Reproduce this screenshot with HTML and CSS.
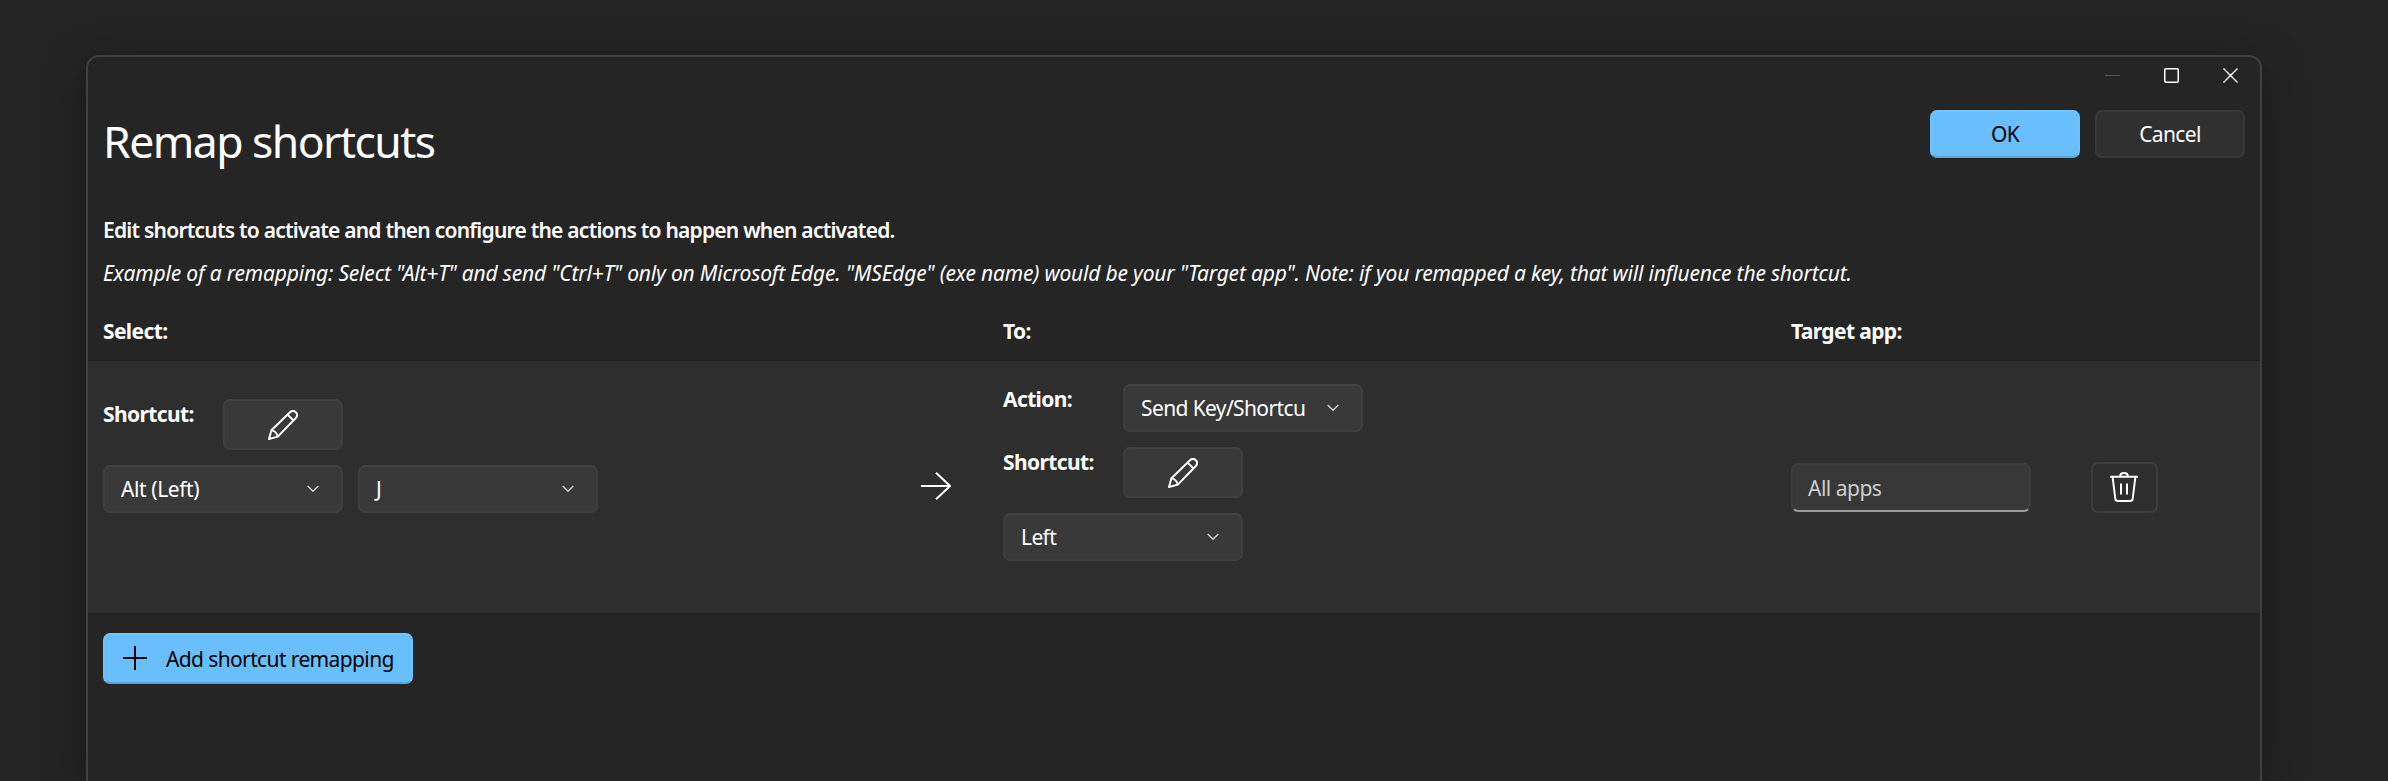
FILE: index.html
```html
<!DOCTYPE html>
<html lang="en">
<head>
<meta charset="utf-8">
<title>Remap shortcuts</title>
<link rel="stylesheet" href="styles.css">
</head>
<body>
<svg class="defs" width="0" height="0" aria-hidden="true">
  <symbol id="pencil" viewBox="0 0 30 30"><g fill="none" stroke="currentColor" stroke-width="2" stroke-linejoin="round"><path d="M1 29 L3.4 20.2 L22 2.2 C24 0.4 26.2 0.6 27.8 2.2 C29.4 3.8 29.6 6 27.8 8 L9.8 26.6 Z"/><path d="M19.6 4.6 L25.4 10.4 M3.4 20.2 C6.4 20.6 9.2 23.4 9.8 26.6"/></g></symbol>
  <symbol id="chevron" viewBox="0 0 12 8"><path d="M0.7 1 L6 6.3 L11.3 1" fill="none" stroke="currentColor" stroke-width="1.5"/></symbol>
</svg>
<main class="window">
  <div class="titlebar">
    <svg class="caption dim" viewBox="0 0 15 15"><path d="M0 7.5H15" stroke="currentColor"/></svg>
    <svg class="caption" viewBox="0 0 15 15"><rect x=".75" y=".75" width="13.5" height="13.5" rx="1" fill="none" stroke="currentColor" stroke-width="1.5"/></svg>
    <svg class="caption" viewBox="0 0 15 15"><path d="M.5 .5L14.5 14.5M14.5 .5L.5 14.5" stroke="currentColor" stroke-width="1.4"/></svg>
  </div>
  <header class="header">
    <h1 class="title">Remap shortcuts</h1>
    <div class="actions">
      <button class="btn accent">OK</button>
      <button class="btn subtle">Cancel</button>
    </div>
  </header>
  <p class="lead">Edit shortcuts to activate and then configure the actions to happen when activated.</p>
  <p class="example">Example of a remapping: Select "Alt+T" and send "Ctrl+T" only on Microsoft Edge. "MSEdge" (exe name) would be your "Target app". Note: if you remapped a key, that will influence the shortcut.</p>
  <div class="columns heads">
    <span class="label">Select:</span><span></span><span class="label">To:</span><span class="label">Target app:</span>
  </div>
  <section class="columns row">
    <div class="from">
      <div class="field"><span class="label">Shortcut:</span><button class="btn edit"><svg class="pencil"><use href="#pencil"/></svg></button></div>
      <div class="combos">
        <div class="combo"><span class="alt">Alt (Left)</span><svg class="chevron"><use href="#chevron"/></svg></div>
        <div class="combo"><span>J</span><svg class="chevron"><use href="#chevron"/></svg></div>
      </div>
    </div>
    <svg class="arrow" viewBox="0 0 30 28"><path d="M0 14H29M15 .7L29 14L15 27.3" fill="none" stroke="currentColor" stroke-width="2"/></svg>
    <div class="to">
      <div class="field"><span class="label">Action:</span><div class="combo"><span>Send Key/Shortcu</span><svg class="chevron"><use href="#chevron"/></svg></div></div>
      <div class="field"><span class="label">Shortcut:</span><button class="btn edit"><svg class="pencil"><use href="#pencil"/></svg></button></div>
      <div class="combo"><span>Left</span><svg class="chevron"><use href="#chevron"/></svg></div>
    </div>
    <div class="target">
      <div class="input"><span>All apps</span></div>
      <button class="btn delete"><svg class="trash" viewBox="0 0 28 30"><g fill="none" stroke="currentColor" stroke-width="2" stroke-linejoin="round"><path d="M0 4.7H28M2.6 5L5.3 26.6Q5.6 29 8 29H20Q22.4 29 22.7 26.6L25.4 5M10 4.5Q10.2 1 14 1Q17.8 1 18 4.5M11 11.5V22.5M17 11.5V22.5"/></g></svg></button>
    </div>
  </section>
  <button class="btn accent add"><svg class="plus" viewBox="0 0 24 24"><path d="M12 0V24M0 12H24" stroke="currentColor" stroke-width="2"/></svg><span>Add shortcut remapping</span></button>
</main>
</body>
</html>
```
FILE: styles.css
```css
* { box-sizing: border-box; }
body {
  margin: 0;
  height: 781px;
  overflow: hidden;
  padding: 55px 126px 0 86px;
  background: #252525;
  color: #fff;
  font: 21px/28px "Noto Sans", "Open Sans", sans-serif;
  letter-spacing: -0.62px;
}
.defs { position: absolute; }
.window {
  height: 726px;
  border: 2px solid #404040;
  border-bottom: 0;
  border-radius: 13px 13px 0 0;
  background: #252525;
  box-shadow: 0 10px 46px rgba(0, 0, 0, .42);
  display: flex;
  flex-direction: column;
}
.titlebar {
  display: flex;
  justify-content: flex-end;
  gap: 44px;
  height: 53px;
  padding: 11px 22px 0 0;
}
.caption { width: 15px; height: 15px; }
.dim { color: #565656; }
.header {
  display: flex;
  justify-content: space-between;
  height: 106px;
  padding: 0 15px;
}
.title {
  margin: 1px 0 0;
  font-size: 44.5px;
  line-height: 60px;
  font-weight: 400;
  letter-spacing: -1.55px;
}
.actions { display: flex; gap: 15px; }
.btn {
  display: flex;
  align-items: center;
  justify-content: center;
  width: 150px;
  height: 48px;
  padding: 0;
  border: 2px solid #373737;
  border-radius: 7px;
  background: #303030;
  color: #fff;
  font: inherit;
  letter-spacing: inherit;
}
.accent {
  background: #69befc;
  border-color: #75c3fc #6fc0fc #5ba4da;
  color: #000;
}
.lead, .example { margin: 0 15px; height: 43px; white-space: nowrap; }
.lead { font-weight: 600; letter-spacing: -0.76px; }
.example { font-style: italic; letter-spacing: -0.18px; }
.columns { display: grid; grid-template-columns: 818px 82px 788px 1fr; padding-left: 15px; }
.heads { height: 58px; padding-top: 15px; }
.label { font-weight: 700; letter-spacing: -0.62px; }
.row {
  height: 255px;
  border-top: 1px solid #202020;
  border-bottom: 2px solid #222;
  background: #2e2e2e;
}
.from { padding-top: 38px; }
.field { display: flex; }
.field .label { width: 120px; padding-top: 1px; }
.combos { display: flex; gap: 15px; padding-top: 15px; }
.combo, .edit { background: #393939; border: 2px solid #3e3e3e; border-top-color: #424242; }
.combo {
  display: flex;
  align-items: center;
  justify-content: space-between;
  width: 240px;
  height: 48px;
  padding: 0 22px 0 16px;
  border-radius: 7px;
}
.alt { letter-spacing: -0.4px; }
.edit { width: 120px; height: 51px; }
.pencil { width: 30px; height: 30px; }
.chevron { width: 12px; height: 8px; color: #d0d0d0; }
.arrow { width: 30px; height: 28px; margin-top: 111px; }
.to { display: flex; flex-direction: column; gap: 15px; padding-top: 23px; }
.target { display: flex; gap: 60px; padding-top: 101px; }
.input {
  width: 240px;
  height: 49px;
  margin-top: 1px;
  padding: 9px 15px;
  border: 2px solid #3c3c3c;
  border-bottom-color: #9a9a9a;
  border-radius: 7px;
  background: #383838;
  color: #cecece;
  letter-spacing: -0.5px;
}
.delete { width: 67px; height: 51px; padding: 0 2px 2px 0; background: #2e2e2e; border-color: #3d3d3d; }
.trash { width: 28px; height: 30px; }
.add { width: 310px; height: 51px; margin: 18px 0 0 15px; justify-content: flex-start; padding-left: 18px; gap: 19px; }
.plus { width: 24px; height: 24px; margin-top: -1px; }
```
